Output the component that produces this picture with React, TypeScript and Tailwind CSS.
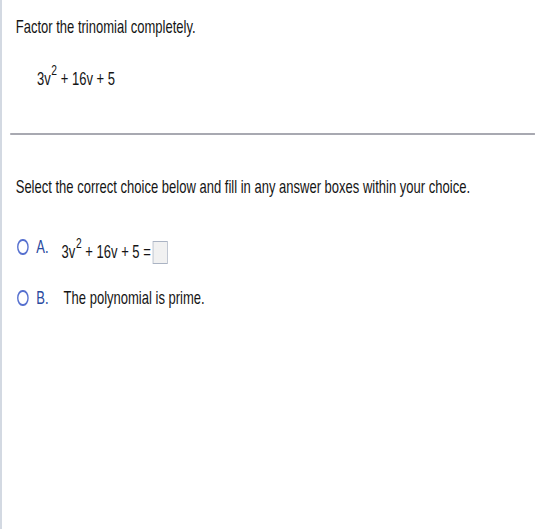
import React from 'react';

// the reference is squeezed horizontally, so the whole column is laid out wide and scaled down on x
function Radio() {
  return <span className="block w-[17px] h-[16px] rounded-full border-2 border-[#5670cf] bg-white" />;
}

function Sq() {
  return <sup className="text-[15px] top-[-10px] ml-[1px]">2</sup>;
}

export default function App() {
  return (
    <div className="w-[535px] h-[529px] overflow-hidden bg-white border-l-2 border-[#d3d9e2] font-['Liberation_Sans',Arial,sans-serif] text-[#151515]">
      <div className="w-[778px] origin-top-left scale-x-[0.685]">
        {/* Question */}
        <div className="pl-[20px] pt-[15px]">
          <p className="text-[19px] leading-[23px] whitespace-nowrap">Factor the trinomial completely.</p>
          <p className="mt-[29px] pl-[31px] text-[19px] leading-[23px] whitespace-nowrap">
            3v<Sq /> + 16v + 5
          </p>
        </div>

        <div className="mt-[43px] ml-[12px] h-[2px] bg-[#a8a9b1]" />

        {/* Answer choices */}
        <div className="pl-[20px]">
          <p className="mt-[40px] text-[19px] leading-[23px] whitespace-nowrap">
            Select the correct choice below and fill in any answer boxes within your choice.
          </p>

          <div className="mt-[37px] flex items-start text-[19px] leading-[23px]">
            <div className="pl-[2px] pt-[4px]"><Radio /></div>
            <span className="ml-[11px] text-[#2a4a9e]">A.</span>
            <div className="ml-[19px] mt-[5px] flex items-start whitespace-nowrap">
              <span>3v<Sq /> + 16v + 5 =</span>
              <span className="ml-[3px] mt-[1px] block w-[22px] h-[23px] border border-[#aab3c3] bg-[#f1f1f1]" />
            </div>
          </div>

          <div className="mt-[22px] flex items-start text-[19px] leading-[23px]">
            <div className="pl-[2px] pt-[4px]"><Radio /></div>
            <span className="ml-[11px] text-[#2a4a9e]">B.</span>
            <span className="ml-[22px] whitespace-nowrap">The polynomial is prime.</span>
          </div>
        </div>
      </div>
    </div>
  );
}
